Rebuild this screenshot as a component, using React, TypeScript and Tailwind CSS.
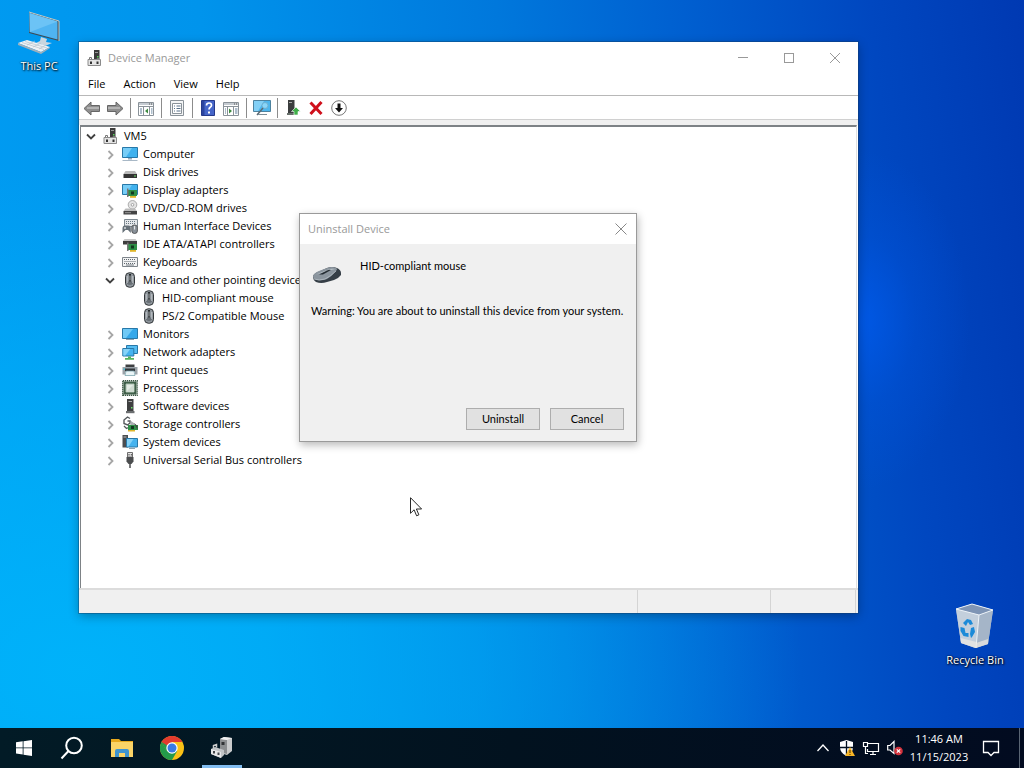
import type { ReactNode } from "react"

type IconName =
    | "pc"
    | "computer"
    | "disk"
    | "display"
    | "dvd"
    | "hid"
    | "ide"
    | "keyboard"
    | "mouse"
    | "monitor"
    | "network"
    | "printer"
    | "cpu"
    | "software"
    | "storage"
    | "system"
    | "usb"

interface TreeNode {
    label: string
    icon: IconName
    level: number
    state?: "open" | "closed"
}

const nodes: TreeNode[] = [
    { label: "VM5", icon: "pc", level: 0, state: "open" },
    { label: "Computer", icon: "computer", level: 1, state: "closed" },
    { label: "Disk drives", icon: "disk", level: 1, state: "closed" },
    { label: "Display adapters", icon: "display", level: 1, state: "closed" },
    { label: "DVD/CD-ROM drives", icon: "dvd", level: 1, state: "closed" },
    { label: "Human Interface Devices", icon: "hid", level: 1, state: "closed" },
    { label: "IDE ATA/ATAPI controllers", icon: "ide", level: 1, state: "closed" },
    { label: "Keyboards", icon: "keyboard", level: 1, state: "closed" },
    { label: "Mice and other pointing devices", icon: "mouse", level: 1, state: "open" },
    { label: "HID-compliant mouse", icon: "mouse", level: 2 },
    { label: "PS/2 Compatible Mouse", icon: "mouse", level: 2 },
    { label: "Monitors", icon: "monitor", level: 1, state: "closed" },
    { label: "Network adapters", icon: "network", level: 1, state: "closed" },
    { label: "Print queues", icon: "printer", level: 1, state: "closed" },
    { label: "Processors", icon: "cpu", level: 1, state: "closed" },
    { label: "Software devices", icon: "software", level: 1, state: "closed" },
    { label: "Storage controllers", icon: "storage", level: 1, state: "closed" },
    { label: "System devices", icon: "system", level: 1, state: "closed" },
    { label: "Universal Serial Bus controllers", icon: "usb", level: 1, state: "closed" },
]

const indents = ["pl-0", "pl-[19px]", "pl-[38px]"]

function Card() {
    return (
        <>
            <path d="M6 8h9v6H6z" fill="#2f8f46" />
            <path d="M5 6.500h1.500V15H5z" fill="#777" />
            <path d="M9 9.500h3v3H9z" fill="#12391f" />
            <path d="M8 14h6v1.800H8z" fill="#e0b62c" />
        </>
    )
}

const icons: Record<IconName, ReactNode> = {
    pc: (
        <>
            <path d="M7 0h5.500v9H7z" fill="#3b3b3b" />
            <path d="M8 2h3v1H8z" fill="#999" />
            <path d="M10 6h1.500v1.500H10z" fill="#5ad05a" />
            <path d="M2.500 10V7.500h2V10M10 10V8.500h2V10" fill="none" stroke="#777" />
            <path d="M1 9.500h12.500v6H1z" fill="#e4e4e4" stroke="#8b8b8b" />
            <path d="M3 11.500h2v2.500H3zM9.500 11.500h2v2.500h-2z" fill="#333" />
        </>
    ),
    computer: (
        <>
            <path d="M.5 1.500h15v10H.5z" fill="#41b2ee" stroke="#2878a8" />
            <path d="M1 2h9l-6 9H1z" fill="#77cdf7" />
            <path d="M6 12h4v1.500H6z" fill="#9ab" />
            <path d="M.5 14.500h15" stroke="#a8b8c6" />
        </>
    ),
    disk: (
        <>
            <path d="M3.500 7h9.500l2 3H1.500z" fill="#b9b9b9" />
            <path d="M1.500 10h13.500v4H1.500z" fill="#333" />
            <path d="M12 11.500h2v1h-2z" fill="#6fe06f" />
        </>
    ),
    display: (
        <>
            <path d="M.5 2.500h15v10H.5z" fill="#41b2ee" stroke="#2878a8" />
            <path d="M1 3h9l-6 9H1z" fill="#77cdf7" />
            <Card />
        </>
    ),
    dvd: (
        <>
            <circle cx="10.500" cy="4.800" r="4.300" fill="#e3e3e3" stroke="#999" strokeWidth=".8" />
            <circle cx="10.500" cy="4.800" r="1.300" fill="#fff" stroke="#888" strokeWidth=".7" />
            <path d="M3.500 8.500h9.500l2 2.500H1.500z" fill="#bcbcbc" />
            <path d="M1.500 11h13.500v3.500H1.500z" fill="#444" />
            <path d="M3 12.200h6v1H3z" fill="#999" />
        </>
    ),
    hid: (
        <>
            <path d="M2.500 1.500h13v7h-13z" fill="#e4e7ea" stroke="#7f8a92" />
            <path d="M4 3.500h10M4 5.500h10" stroke="#687680" strokeDasharray="1 1" />
            <path d="M.5 15V10.500Q.5 7.500 3 7.500h3.500Q8.800 7.500 8.800 10.500V15L6 12H3.500z" fill="#667078" />
            <path d="M2 10h2M3 9v2" stroke="#e8ebed" strokeWidth=".8" />
            <path
                d="M9.800 9q0-2 2.700-2t2.900 2v4q0 2.500-2.800 2.500T9.800 13z"
                fill="#899199"
                stroke="#444"
                strokeWidth=".8"
            />
            <path d="M12.600 8v3.500" stroke="#eee" />
        </>
    ),
    ide: (
        <>
            <path d="M2.500 3h11l1.500 2H1z" fill="#c7c7c7" />
            <path d="M1 5h14v3.500H1z" fill="#3d3d3d" />
            <Card />
        </>
    ),
    keyboard: (
        <>
            <path d="M.5 3.500h15v9H.5z" fill="#f2f3f4" stroke="#7e858b" />
            <path d="M2 5.500h12M2.500 7.500h12M2 9.500h12" stroke="#5f676e" strokeDasharray="1 1" />
            <path d="M4 11h8" stroke="#737b82" />
        </>
    ),
    mouse: (
        <>
            <rect x="3.500" y=".7" width="9" height="14.600" rx="4" fill="#8e959b" stroke="#33373a" />
            <path d="M5 9q3 1.500 6 0v2.500q-3 3-6 0z" fill="#686f75" />
            <path d="M7 2h2v7.500H7z" fill="#24282b" />
            <path d="M8 3.500v5" stroke="#d9dde0" strokeWidth=".8" />
            <path d="M5.300 4v7M10.700 4v7" stroke="#c7ccd0" strokeWidth=".8" />
        </>
    ),
    monitor: (
        <>
            <path d="M.5 2.500h15v10H.5z" fill="#35a8ea" stroke="#2878a8" />
            <path d="M1 3h10l-7 9H1z" fill="#6fc9f6" />
            <path d="M4 13.500h8" stroke="#8fa2b0" />
        </>
    ),
    network: (
        <>
            <path d="M4.500 1.500h11v8h-11z" fill="#55bdf2" stroke="#2878a8" />
            <path d="M.8 4.500h11v7.500h-11z" fill="#46b3ef" stroke="#2878a8" />
            <path d="M1.300 5h7l-5 6.500h-2z" fill="#86d3f8" />
            <path d="M6 12.500h3V14h3v1.800H3V14h3z" fill="#56b45e" />
        </>
    ),
    printer: (
        <>
            <path d="M3.500 2.500h9V6h-9z" fill="#3d3f41" />
            <path d="M.5 5h15v7.500H13V8H3v4.500H.5z" fill="#9aa2a8" />
            <path d="M3 6.500h10v3H3z" fill="#33383c" />
            <path d="M4 9h8l1 4.500H3z" fill="#eaf5f7" stroke="#6d9ba5" strokeWidth=".7" />
            <path d="M1.500 6.500h1.500v1.500H1.500z" fill="#48c4d8" />
        </>
    ),
    cpu: (
        <>
            <path
                d="M.8.800h14.400v14.400H.8z"
                fill="none"
                stroke="#3b5844"
                strokeWidth="1.400"
                strokeDasharray="1.300 .7"
            />
            <path d="M1.500 1.500h13v13h-13z" fill="#3f5f49" />
            <path d="M4 4h8v8H4z" fill="#e3ebe4" stroke="#a9bfae" />
            <path d="M4 12 12 4v8z" fill="#cfdbd1" />
        </>
    ),
    software: (
        <>
            <path d="M5 1h6.500v12H5z" fill="#3e3f40" />
            <path d="M6.500 3h3.500v1H6.500z" fill="#aaa" />
            <path d="M9 9h1.500v1.500H9z" fill="#6be06b" />
            <path d="M4 13h8.500v2.200H4z" fill="#6b6e70" />
        </>
    ),
    storage: (
        <>
            <path d="M8 2.500 5.500 1 2 4v3.500L5.500 9 8 7V5H5.500" fill="none" stroke="#555a5d" strokeWidth="1.400" />
            <path d="m2 10 2.500 2.500 2-1" fill="none" stroke="#555a5d" strokeWidth="1.300" />
            <path d="m9 5 5 3.500v2l-6-2z" fill="#a9aeb1" />
            <path d="M6 9h10v5H6z" fill="#2f8f46" />
            <path d="M9 10h3v3H9z" fill="#12391f" />
            <path d="M6 14h7v1.500H6z" fill="#e0b62c" />
            <path d="m12 7 3.500 3v3.500z" fill="#444" />
        </>
    ),
    system: (
        <>
            <path d="M.5 1h5.500v12.500H.5z" fill="#4a4d50" />
            <path d="M1.500 2.500h3v1h-3z" fill="#bbb" />
            <path d="M4.500 4.500h11v8.500h-11z" fill="#46b3ef" stroke="#2878a8" />
            <path d="M5 5h6.500l-5 7.500H5z" fill="#86d3f8" />
            <path d="M7 14.500h6" stroke="#8fa2b0" />
        </>
    ),
    usb: (
        <>
            <path d="M5.500.500h5V5h-5z" fill="#e5e5e5" stroke="#6d6d6d" />
            <path d="M6.500 2h1v1.500h-1zM8.800 2h1v1.500h-1z" fill="#444" />
            <path d="M4.500 5h7v4.500L9.500 12h-3l-2-2.500z" fill="#4b4d4f" />
            <path d="M8 12v4" stroke="#4b4d4f" strokeWidth="1.500" />
        </>
    ),
}

function SmallIcon({ name }: { name: IconName }) {
    return (
        <svg viewBox="0 0 16 16" className="h-4 w-4 shrink-0" aria-hidden="true">
            {icons[name]}
        </svg>
    )
}

function Chevron({ state }: { state: "open" | "closed" }) {
    return (
        <svg viewBox="0 0 12 12" className="h-3 w-3" fill="none" aria-hidden="true">
            {state === "open" ? (
                <path d="m2 4.500 4 4 4-4" stroke="#404040" strokeWidth="1.800" />
            ) : (
                <path d="m4.500 3 4 4-4 4" stroke="#a6a6a6" strokeWidth="1.800" />
            )}
        </svg>
    )
}

function ToolButton({ label, children }: { label: string; children: ReactNode }) {
    return (
        <button type="button" aria-label={label} className="flex h-[22px] w-[23px] items-center justify-center">
            <svg viewBox="0 0 18 18" className="h-[18px] w-[18px]" fill="none" aria-hidden="true">
                {children}
            </svg>
        </button>
    )
}

function ToolSeparator() {
    return (
        <span className="flex w-2 justify-center">
            <span className="h-5 w-px bg-[#8c8c8c]" />
        </span>
    )
}

function Pane() {
    return (
        <>
            <path d="M1.500 3.500h15v13h-15z" fill="#fff" stroke="#8a9299" />
            <path d="M2 4h14v2H2z" fill="#c5cbd1" />
            <path d="M12 5h1M14 5h1" stroke="#555" />
            <path d="M2 7.500h14" stroke="#8a9299" />
        </>
    )
}

function Toolbar() {
    return (
        <div className="flex h-6 shrink-0 items-center border-t border-[#b8b8b8] bg-white pl-px">
            <ToolButton label="Back">
                <path d="M1 9.500 8 3v3.500h8.500v6H8V16z" fill="#8f8f8f" stroke="#666" />
                <path d="M4 9h12" stroke="#b4b4b4" strokeWidth="2" />
            </ToolButton>
            <ToolButton label="Forward">
                <path d="m17 9.500-7-6.500v3.500H1.500v6H10V16z" fill="#8f8f8f" stroke="#666" />
                <path d="M2 9h12" stroke="#b4b4b4" strokeWidth="2" />
            </ToolButton>
            <ToolSeparator />
            <ToolButton label="Show/Hide Console Tree">
                <Pane />
                <path d="M6.500 8v8M12.500 8v8" stroke="#8a9299" />
                <path d="M3 10h2M3 12h2M3 14h2M14 10h1.500M14 12h1.500M14 14h1.500" stroke="#5f7f9a" />
                <path d="M11 9.500v5L8 12z" fill="#3d8b40" />
            </ToolButton>
            <ToolSeparator />
            <ToolButton label="Properties">
                <path d="M2.500 1.500h13v15h-13z" fill="#f4f5f6" stroke="#8a9299" />
                <path d="M4.500 4.500h9v10h-9z" fill="#fff" stroke="#8a9299" />
                <path d="M6 7h1M6 9.500h1M6 12h1M8.500 7h4M8.500 9.500h4M8.500 12h4" stroke="#59718a" />
            </ToolButton>
            <ToolSeparator />
            <ToolButton label="Help">
                <path d="M2.500 1.500h13v15h-13z" fill="#4565c8" stroke="#26398a" />
                <path d="M3 2h2.500v14H3z" fill="#2b449f" />
                <path
                    d="M7.500 6.500q0-2.500 2.500-2.500t2.500 2.300q0 1.200-1.300 2-1.200.800-1.200 2.200"
                    stroke="#fff"
                    strokeWidth="1.700"
                />
                <path d="M9 12.500h2v2H9z" fill="#fff" />
            </ToolButton>
            <ToolButton label="Show/Hide Action Pane">
                <Pane />
                <path d="M5.500 8v8M11.500 8v8" stroke="#8a9299" />
                <path d="M3 10h1M3 12h1M3 14h1M13 10h2.500M13 12h2.500M13 14h2.500" stroke="#5f7f9a" />
                <path d="M7 9.500v5l3-2.500z" fill="#3d8b40" />
            </ToolButton>
            <ToolSeparator />
            <ToolButton label="Scan for hardware changes">
                <path d="M.5 1.500h17v11H.5z" fill="#4db6ee" stroke="#4d829f" />
                <path d="M1 2h10l-6 10H1z" fill="#83d0f6" />
                <circle cx="12" cy="6.500" r="3" fill="#8ad5f8" stroke="#6fb0d0" />
                <path d="m10 9-6 7" stroke="#5b6a73" strokeWidth="1.500" />
                <path d="M5 15.500h9" stroke="#7d8d97" />
            </ToolButton>
            <ToolSeparator />
            <ToolButton label="Update device driver">
                <path d="M4 1h6.500v13H4z" fill="#3b3d3e" />
                <path d="M5 3h3v1H5z" fill="#aaa" />
                <path d="M3 14h8v2H3z" fill="#68706b" />
                <path d="m12 8 4.500 4.500H14V16h-4v-3.500H7.500z" fill="#3fae49" stroke="#fff" strokeWidth=".6" />
            </ToolButton>
            <ToolButton label="Uninstall device">
                <path d="m3.500 3.500 11 11.500M14.500 3 3.500 15" stroke="#cf101c" strokeWidth="3" />
            </ToolButton>
            <ToolButton label="Disable device">
                <circle cx="9" cy="9" r="7.300" fill="#fff" stroke="#777" />
                <path d="M7.500 4.500h3V9H13l-4 4.500L5 9h2.500z" fill="#111" />
            </ToolButton>
        </div>
    )
}

function DeviceManager() {
    return (
        <section
            aria-label="Device Manager"
            className="absolute top-[42px] left-[79px] flex h-[571px] w-[779px] flex-col bg-white shadow-[0_0_0_1px_rgba(20,60,100,0.4),0_3px_10px_rgba(0,0,0,0.3)]"
        >
            <header className="flex h-[31px] shrink-0 items-center pl-2 text-[#999]">
                <SmallIcon name="pc" />
                <h1 className="ml-[5px] grow">Device Manager</h1>
                <button type="button" aria-label="Minimize" className="flex h-full w-[46px] items-center justify-center">
                    <span className="h-px w-2.5 bg-[#999]" />
                </button>
                <button type="button" aria-label="Maximize" className="flex h-full w-[46px] items-center justify-center">
                    <span className="h-2.5 w-2.5 border border-[#999]" />
                </button>
                <button type="button" aria-label="Close" className="flex h-full w-[46px] items-center justify-center">
                    <svg viewBox="0 0 12 12" className="h-3 w-3" aria-hidden="true">
                        <path d="m1 1 10 10M11 1 1 11" stroke="#999" />
                    </svg>
                </button>
            </header>
            <nav className="flex h-[22px] shrink-0 items-center">
                {["File", "Action", "View", "Help"].map((item) => (
                    <button key={item} type="button" className="px-[9px]">
                        {item}
                    </button>
                ))}
            </nav>
            <Toolbar />
            <div className="h-[6px] shrink-0 border-t border-[#d0d0d0] bg-[#f0f0f0]" />
            <ul className="mx-px grow overflow-hidden border-t-2 border-r border-l border-t-[#7d8286] border-r-[#e0e0e0] border-l-[#7d8286]">
                {nodes.map((node) => (
                    <li key={node.label} className={`flex h-[18px] items-center ${indents[node.level]}`}>
                        <span className="mr-0.5 flex w-5 justify-center">
                            {node.state && <Chevron state={node.state} />}
                        </span>
                        <SmallIcon name={node.icon} />
                        <span className="ml-[5px] whitespace-nowrap">{node.label}</span>
                    </li>
                ))}
            </ul>
            <footer className="flex h-[25px] shrink-0 border-t-2 border-[#dcdcdc] bg-[#f0f0f0] pr-0.5">
                <span className="grow border-r border-[#d4d4d4]" />
                <span className="w-[133px] border-r border-[#d4d4d4]" />
                <span className="w-[85px] border-r border-[#d4d4d4]" />
            </footer>
        </section>
    )
}

function UninstallDialog() {
    return (
        <section
            role="dialog"
            aria-label="Uninstall Device"
            className="absolute top-[213px] left-[299px] flex h-[229px] w-[338px] flex-col border border-[#9a9a9a] bg-[#f0f0f0] font-[Lato,sans-serif] shadow-[1px_3px_8px_rgba(0,0,0,0.28)]"
        >
            <header className="flex h-[30px] shrink-0 items-center bg-white pl-2 font-['Open_Sans',sans-serif] text-[#999]">
                <h2 className="grow">Uninstall Device</h2>
                <button type="button" aria-label="Close" className="flex h-full w-[31px] items-center justify-center">
                    <svg viewBox="0 0 12 12" className="h-3 w-3" aria-hidden="true">
                        <path d="m.5.500 11 11M11.500.500l-11 11" stroke="#888" />
                    </svg>
                </button>
            </header>
            <div className="flex grow flex-col px-[11px] pt-[14px] pb-[11px]">
                <div className="flex h-[38px] gap-[17px]">
                    <svg viewBox="0 0 32 32" className="h-8 w-8" aria-hidden="true">
                        <path d="M2 19q0-3 5-5l9-4q5-2 10 0 4 2 4 5v2q-2 3-7 5l-7 2q-6 2-11 0-3-2-3-5z" fill="#363f47" />
                        <path d="M2 18q1-3 6-5l8-3q5-2 9 0 2 1 0 3-4 5-9 8-5 2-10 1-4-1-4-4z" fill="#8b959e" />
                        <path d="M5 16.500 16 12q5-2 8-1-5 1-9 3z" fill="#b7c0c7" />
                        <path d="m8 16.500 8-4q2-1 4-.5l-8 4.500z" fill="#252d33" />
                        <path d="M3 21q5 2 11 0 6-3 11-8" fill="none" stroke="#b5bec5" strokeWidth=".8" />
                    </svg>
                    <p>HID-compliant mouse</p>
                </div>
                <p className="mt-[7px] whitespace-nowrap">
                    Warning: You are about to uninstall this device from your system.
                </p>
                <div className="mt-auto flex justify-end gap-[10px] pr-px">
                    <button type="button" className="h-[22px] w-[74px] border border-[#adadad] bg-[#e1e1e1]">
                        Uninstall
                    </button>
                    <button type="button" className="h-[22px] w-[74px] border border-[#adadad] bg-[#e1e1e1]">
                        Cancel
                    </button>
                </div>
            </div>
        </section>
    )
}

function Taskbar() {
    return (
        <footer className="flex h-10 shrink-0 items-center bg-linear-to-r from-[#021b26] via-[#02121f] to-[#020b20] text-white">
            <button type="button" aria-label="Start" className="flex h-full w-12 items-center justify-center">
                <svg viewBox="0 0 16 16" className="h-4 w-4" fill="#fff" aria-hidden="true">
                    <path d="M0 2.300 6.700 1.300v6.200H0zM7.500 1.200 16 0v7.500H7.500zM0 8.300h6.700v6.200L0 13.600zM7.500 8.300H16V16l-8.500-1.200z" />
                </svg>
            </button>
            <button type="button" aria-label="Search" className="flex h-full w-12 items-center justify-center">
                <svg viewBox="0 0 24 24" className="h-6 w-6" fill="none" stroke="#fff" strokeWidth="2" aria-hidden="true">
                    <circle cx="14" cy="9.500" r="7.800" />
                    <path d="M8.500 15 1.500 22.500" />
                </svg>
            </button>
            <div className="flex h-full gap-0.5 pl-0.5">
                <button type="button" aria-label="File Explorer" className="flex w-12 items-center justify-center">
                    <svg viewBox="0 0 24 24" className="h-6 w-6" aria-hidden="true">
                        <path d="M1 3h8l2 2h12v16H1z" fill="#e8a91d" />
                        <path d="M1 6h22v15H1z" fill="#fbd467" />
                        <path d="M5 21v-6q0-2 2-2h10q2 0 2 2v6h-4v-4H9v4z" fill="#3f94cf" />
                    </svg>
                </button>
                <button type="button" aria-label="Google Chrome" className="flex w-12 items-center justify-center">
                    <svg viewBox="0 0 24 24" className="h-6 w-6" aria-hidden="true">
                        <circle cx="12" cy="12" r="12" fill="#fbc116" />
                        <path d="M12 12 1.600 6A12 12 0 0 1 22.400 6H12z" fill="#e33b2e" />
                        <path d="M1.600 6A12 12 0 0 0 12 24l5.200-9L12 12 6.800 15z" fill="#249a4a" />
                        <path d="M1.600 6 6.800 15 12 6z" fill="#249a4a" />
                        <path d="M1.600 6H12L7 13z" fill="#e33b2e" />
                        <path d="M1.600 6 6.800 15 8 10z" fill="#249a4a" />
                        <circle cx="12" cy="12" r="5.700" fill="#fff" />
                        <circle cx="12" cy="12" r="4.500" fill="#3a7ae4" />
                    </svg>
                </button>
                <button type="button" aria-label="Device Manager" className="relative flex w-12 items-center justify-center">
                    <svg viewBox="0 0 24 24" className="h-6 w-6" aria-hidden="true">
                        <path d="m10 3 4-2 8 1v13l-5 4-7-2z" fill="#c9cbcc" />
                        <path d="m10 3 7 1v14l-7-2z" fill="#8b8e90" />
                        <path d="m10 3 4-2 8 1-5 2z" fill="#f0f0f1" />
                        <path d="M11.500 6h3v3h-3z" fill="#303335" />
                        <path d="m1 13 4-2 9 3v5l-3 3-10-4z" fill="#c2c5c7" />
                        <path d="m1 13 10 3v6L1 18z" fill="#e6e7e8" />
                        <path d="M3 15h2v2.500H3zM7.500 16.500h2V19h-2z" fill="#44474a" />
                        <path d="M3.500 12V9.500l3-1v3" fill="none" stroke="#ccc" strokeWidth="1.500" />
                    </svg>
                    <span className="absolute bottom-0 h-[3px] w-10 bg-[#82bdf0]" />
                </button>
            </div>
            <div className="ml-auto flex h-full items-center">
                <button type="button" aria-label="Show hidden icons" className="flex h-full w-6 items-center justify-center">
                    <svg viewBox="0 0 16 16" className="h-4 w-4" fill="none" stroke="#fff" strokeWidth="1.300" aria-hidden="true">
                        <path d="m2.500 11 5.500-6 5.500 6" />
                    </svg>
                </button>
                <button type="button" aria-label="Windows Security" className="flex h-full w-6 items-center justify-center">
                    <svg viewBox="0 0 16 16" className="h-4 w-4" aria-hidden="true">
                        <path d="M7.500 0 14 2v5q0 6-6.500 9Q1 13 1 7V2z" fill="#fff" />
                        <path d="M7.500 1v14M1 7.500h13" stroke="#031020" strokeWidth="1.300" />
                        <path d="m11 7 5 9H6z" fill="#f7b526" />
                        <path d="M11 10v3M11 14v1" stroke="#4a2f00" />
                    </svg>
                </button>
                <button type="button" aria-label="Network" className="flex h-full w-6 items-center justify-center">
                    <svg viewBox="0 0 18 16" className="h-4 w-[18px]" fill="none" stroke="#fff" strokeWidth="1.200" aria-hidden="true">
                        <path d="M6 3.500h10.500v8H5.500V9M8 14.500h6M11 12v2.500" />
                        <path d="M1.500 2.500h4v4h-4zM3.500 6.500v7H6" />
                    </svg>
                </button>
                <button type="button" aria-label="Volume muted" className="flex h-full w-6 items-center justify-center">
                    <svg viewBox="0 0 16 16" className="h-4 w-4" aria-hidden="true">
                        <path d="M.7 5.500h2.300L7 1.500v12L3 10H.7z" fill="none" stroke="#fff" strokeWidth="1.200" />
                        <circle cx="11.500" cy="11" r="4.300" fill="#d3323c" />
                        <path d="m9.800 9.300 3.400 3.400m0-3.400-3.400 3.400" stroke="#fff" strokeWidth="1.200" />
                    </svg>
                </button>
                <div className="w-16 text-center leading-[18px] whitespace-nowrap">
                    <time className="block">11:46 AM</time>
                    <time className="block">11/15/2023</time>
                </div>
                <button type="button" aria-label="Notifications" className="mr-2 flex h-full w-10 items-center justify-center">
                    <svg viewBox="0 0 18 18" className="h-[18px] w-[18px]" fill="none" stroke="#fff" strokeWidth="1.300" aria-hidden="true">
                        <path d="M1.500 2.500h15v11H12L9 16.500l-3-3H1.500z" />
                    </svg>
                </button>
                <button type="button" aria-label="Show desktop" className="h-full w-[5px] border-l border-[#5a6574]" />
            </div>
        </footer>
    )
}

export default function App() {
    return (
        <div className="flex min-h-screen cursor-default flex-col overflow-hidden font-['Open_Sans',sans-serif] text-[11px] leading-4 text-black">
            <main className="relative grow bg-[radial-gradient(ellipse_110px_170px_at_84%_44%,rgba(0,92,240,0.75),rgba(0,88,230,0.3)_50%,transparent),radial-gradient(ellipse_720px_500px_at_8%_92%,rgba(0,184,252,0.8),rgba(0,180,250,0.5)_55%,transparent),linear-gradient(84deg,#009cf2_0%,#0094ec_25%,#0078dc_52%,#005fd0_69%,#0047c0_86%,#0039b2_100%)]">
                <button
                    type="button"
                    className="absolute top-2.5 left-0 flex w-[78px] flex-col items-center gap-1 text-white [text-shadow:1px_1px_2px_#000,0_0_2px_#000]"
                >
                    <svg viewBox="0 0 44 44" className="h-11 w-11" aria-hidden="true">
                        <path d="m12 2 30 9v20L12 23z" fill="#3c4b57" />
                        <path d="m12.500 3 28 8.500v18L12.500 22z" fill="#4fb4f2" />
                        <path d="m12.500 3 28 8.500L13 22z" fill="#6cc3f6" />
                        <path d="m12 2 30 9v20" fill="none" stroke="#c3ccc9" />
                        <path d="m24 27 6 2-1 3 6 1-7 3-9-3 4-2z" fill="#c9d6df" />
                        <path d="m1 33 9-3 23 7-9 5z" fill="#eef2f5" />
                        <path d="m1 33 23 9 9-5v1l-9 6-23-9z" fill="#9fb0bc" />
                        <path
                            d="m5 32.500 22 7M8 31.500l22 6.500M10 35l8-4M16 37l8-4M22 39l7-4"
                            stroke="#b5c2cb"
                            strokeWidth=".7"
                        />
                    </svg>
                    <span>This PC</span>
                </button>

                <button
                    type="button"
                    className="absolute right-2.5 bottom-[60px] flex w-[78px] flex-col items-center gap-0.5 text-white [text-shadow:1px_1px_2px_#000,0_0_2px_#000]"
                >
                    <svg viewBox="0 0 44 48" className="h-12 w-11" aria-hidden="true">
                        <path d="m3 7 16-5 21 6-5 34-13 4L8 41z" fill="#b5c3d3" fillOpacity=".9" />
                        <path d="m3 7 16-5 21 6-14 5z" fill="#7f95b5" />
                        <path d="m3 7 23 6-3 33L8 41z" fill="#c3cfdc" />
                        <path d="m26 13 14-5-5 34-12 4z" fill="#a5b5c8" />
                        <path d="m3 7 16-5 21 6-14 5zM26 13l-3 33" fill="none" stroke="#edf3f8" />
                        <path d="m7.500 36 16 4-.5 6-15-5zM23 41l12-4v5l-12 4z" fill="#eee9e4" fillOpacity=".7" />
                        <path d="m10 21 4-4 4 1 2 4-3 1-2-3-2 4z" fill="#1b8ad8" />
                        <path d="m7.500 25 4 1 1 5h3v4l-5-1-3-5z" fill="#1b8ad8" />
                        <path d="m18 26 3-1 1 5-3 5-1 1-1-4z" fill="#1b8ad8" />
                    </svg>
                    <span>Recycle Bin</span>
                </button>

                <DeviceManager />
                <UninstallDialog />

                <svg
                    viewBox="0 0 13 20"
                    className="pointer-events-none absolute top-[497px] left-[410px] h-5 w-[13px]"
                    aria-hidden="true"
                >
                    <path
                        d="M.5.700v15.600l3.600-3.500 2.500 6 2.300-1-2.500-5.800h5.200z"
                        fill="#fff"
                        stroke="#111"
                        strokeWidth=".9"
                    />
                </svg>
            </main>
            <Taskbar />
        </div>
    )
}
